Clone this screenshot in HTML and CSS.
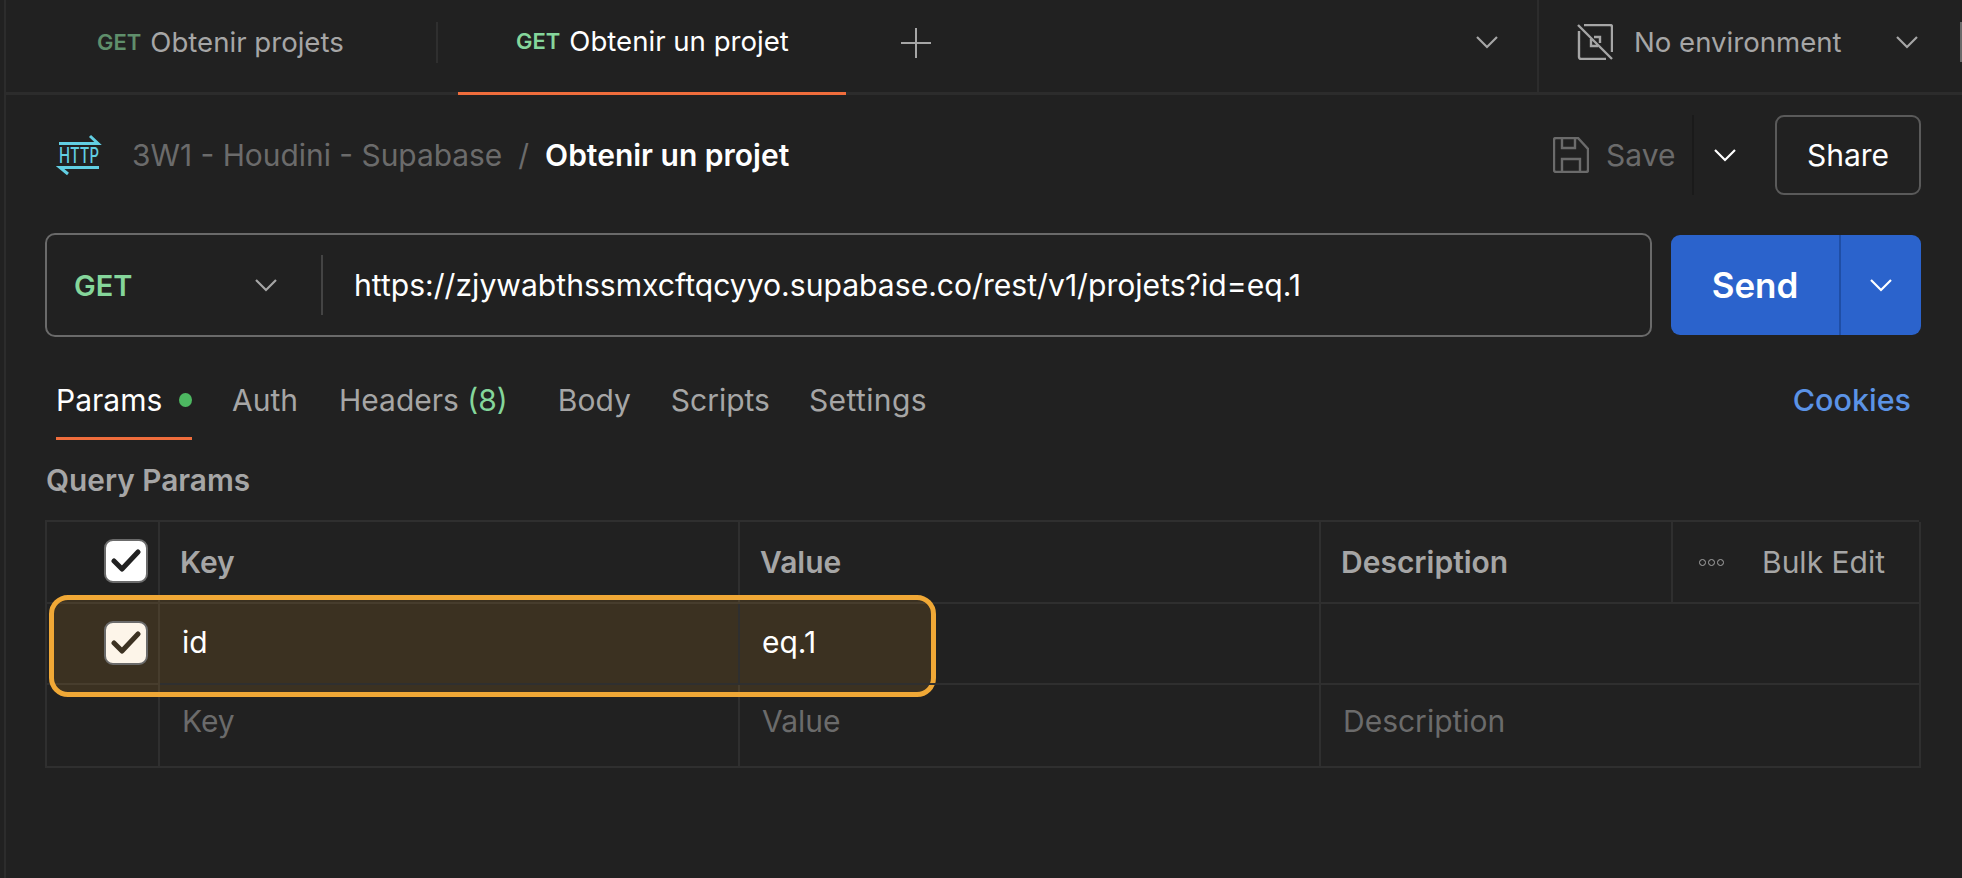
FILE: index.html
```html
<!DOCTYPE html>
<html lang="fr">
<head>
<meta charset="utf-8">
<title>Obtenir un projet</title>
<link rel="stylesheet" href="styles.css">
</head>
<body>
<div class="app">
  <header class="tabbar">
    <div class="tab tab-first">
      <span class="verb verb-dim">GET</span><span class="tab-name">Obtenir projets</span>
    </div>
    <div class="tab-sep"></div>
    <div class="tab tab-active">
      <span class="verb">GET</span><span class="tab-name">Obtenir un projet</span>
    </div>
    <svg class="plus" viewBox="0 0 30 30"><path d="M15 0V30M0 15H30"/></svg>
    <div class="spacer"></div>
    <svg class="chev chev-grey tabs-chev" viewBox="0 0 22 14"><path d="M1 2l10 10L21 2"/></svg>
    <div class="env">
      <svg class="env-icon" viewBox="0 0 36 36"><path d="M7 1H33a2 2 0 0 1 2 2V28M29 35H4a2 2 0 0 1-2-2V7M1 1L35 35M14 15V22H21M17 13H23V19"/></svg>
      <span class="env-name">No environment</span>
      <svg class="chev chev-grey env-chev" viewBox="0 0 22 14"><path d="M1 2l10 10L21 2"/></svg>
    </div>
    <div class="edge-mark"></div>
  </header>

  <main class="request">
    <div class="crumbs">
      <svg class="http" viewBox="0 0 42 40">
        <path class="http-line" d="M1 8.5H40L32 1M41 32.5H2L10 39"/>
        <text x="21" y="28" text-anchor="middle" textLength="40" lengthAdjust="spacingAndGlyphs">HTTP</text>
      </svg>
      <span class="crumb-parent">3W1 - Houdini - Supabase</span>
      <span class="crumb-slash">/</span>
      <span class="crumb-name">Obtenir un projet</span>
      <div class="spacer"></div>
      <svg class="save-icon" viewBox="0 0 36 36"><path d="M3 1H25L35 12V33a2 2 0 0 1-2 2H3a2 2 0 0 1-2-2V3a2 2 0 0 1 2-2ZM9 1V11H22V1M9 35V22H27V35"/></svg>
      <span class="save">Save</span>
      <div class="save-sep"></div>
      <svg class="chev chev-white save-chev" viewBox="0 0 22 14"><path d="M1 2l10 10L21 2"/></svg>
      <button class="share">Share</button>
    </div>

    <div class="urlrow">
      <div class="urlbox">
        <span class="method">GET</span>
        <svg class="chev chev-grey method-chev" viewBox="0 0 22 14"><path d="M1 2l10 10L21 2"/></svg>
        <div class="url-sep"></div>
        <span class="url">https://zjywabthssmxcftqcyyo.supabase.co/rest/v1/projets?id=eq.1</span>
      </div>
      <div class="send">
        <span class="send-label">Send</span>
        <span class="send-more"><svg class="chev chev-white" viewBox="0 0 22 14"><path d="M1 2l10 10L21 2"/></svg></span>
      </div>
    </div>

    <nav class="subtabs">
      <span class="subtab subtab-active">Params<i class="dot"></i></span>
      <span class="subtab subtab-auth">Auth</span>
      <span class="subtab subtab-headers">Headers <b class="count">(8)</b></span>
      <span class="subtab subtab-body">Body</span>
      <span class="subtab subtab-scripts">Scripts</span>
      <span class="subtab subtab-settings">Settings</span>
      <span class="spacer"></span>
      <span class="subtab cookies">Cookies</span>
    </nav>

    <h2 class="section">Query Params</h2>

    <div class="table-wrap">
      <div class="grid">
        <div class="cell cell-check"><span class="check"><svg viewBox="0 0 30 26"><path d="M3 13l8 8L27 4"/></svg></span></div>
        <div class="cell head">Key</div>
        <div class="cell head">Value</div>
        <div class="cell head">Description</div>
        <div class="cell bulk"><span class="dots"><i></i><i></i><i></i></span><span>Bulk Edit</span></div>

        <div class="cell cell-check"><span class="check check-warm"><svg viewBox="0 0 30 26"><path d="M3 13l8 8L27 4"/></svg></span></div>
        <div class="cell val">id</div>
        <div class="cell val">eq.1</div>
        <div class="cell span2"></div>

        <div class="cell"></div>
        <div class="cell ph">Key</div>
        <div class="cell ph">Value</div>
        <div class="cell ph span2">Description</div>
      </div>
      <div class="highlight"></div>
    </div>
  </main>
</div>
</body>
</html>
```
FILE: styles.css
```css
* { box-sizing: border-box; }
html, body { margin: 0; height: 100%; }
body {
  background: #212121;
  color: #fff;
  font-family: Inter, "Liberation Sans", sans-serif;
  overflow: hidden;
}
.app {
  height: 878px;
  margin-left: 4px;
  border-left: 2px solid #2c2c2c;
  display: flex;
  flex-direction: column;
}
.spacer { flex: 1; }
.chev { display: block; fill: none; stroke-width: 2.2; }
.chev path { fill: none; stroke: currentColor; }
.chev-grey { color: #a6a6a6; width: 22px; height: 14px; }
.chev-white { color: #fff; width: 22px; height: 14px; }

.tabbar {
  height: 95px;
  border-bottom: 3px solid #2c2c2c;
  display: flex;
  align-items: center;
  position: relative;
}
.tab { display: flex; align-items: center; font-size: 27.6px; }
.tab-first { width: 430px; height: 92px; padding-left: 91px; padding-bottom: 8px; color: #a6a6a6; }
.tab-sep { width: 2px; height: 41px; margin-bottom: 7px; background: #2f2f2f; }
.tab-active {
  margin-left: 20px;
  width: 388px;
  padding-left: 58px;
  padding-bottom: 11px;
  height: 95px;
  align-self: flex-start;
  border-bottom: 3px solid #f06d3c;
}
.verb { font-size: 22px; font-weight: 600; color: #85d69b; margin-right: 9px; }
.verb-dim { color: #5f8f6b; }
.plus { width: 30px; height: 30px; margin: 0 0 7px 55px; }
.plus path { stroke: #a6a6a6; stroke-width: 2; fill: none; }
.tabs-chev { margin: 0 39px 8px 0; }
.env {
  width: 425px;
  height: 92px;
  border-left: 2px solid #2c2c2c;
  display: flex;
  align-items: center;
  padding-left: 38px;
  padding-bottom: 8px;
  color: #a6a6a6;
  font-size: 27.6px;
}
.env-icon { width: 36px; height: 36px; margin-right: 21px; fill: none; stroke: #a6a6a6; stroke-width: 2.4; }
.env-name { width: 262px; }
.edge-mark { position: absolute; right: 0; top: 22px; width: 2px; height: 40px; background: #6a6a6a; }

.request { padding: 20px 41px 0 39px; flex: 1; }
.crumbs { height: 80px; display: flex; align-items: center; font-size: 30px; }
.http { width: 42px; height: 40px; margin-left: 13px; margin-right: 32px; overflow: visible; }
.http-line { fill: none; stroke: #62cfe3; stroke-width: 3; }
.http text { font-family: Inter, sans-serif; font-size: 22px; font-weight: 500; fill: #62cfe3; }
.crumb-parent { color: #6b6b6b; font-size: 29.9px; }
.crumb-slash { color: #6b6b6b; margin: 0 16px; }
.crumb-name { font-weight: 600; }
.save-icon { width: 36px; height: 36px; fill: none; stroke: #6b6b6b; stroke-width: 2.4; margin-right: 17px; }
.save { color: #6b6b6b; width: 86px; }
.save-sep { width: 2px; height: 80px; background: #1a1a1a; }
.save-chev { margin: 0 39px 0 20px; }
.share {
  width: 146px;
  height: 80px;
  background: transparent;
  border: 2px solid #5a5a5a;
  border-radius: 9px;
  color: #fff;
  font: 400 30px Inter, sans-serif;
}

.urlrow { margin-top: 38px; height: 104px; display: flex; align-items: center; }
.urlbox {
  width: 1607px;
  height: 104px;
  border: 2px solid #6a6a6a;
  border-radius: 10px;
  display: flex;
  align-items: center;
  padding-left: 27px;
}
.method { font-size: 29px; font-weight: 600; color: #85d69b; width: 181px; }
.method-chev { margin-right: 44px; }
.url-sep { width: 2px; height: 60px; background: #444; }
.url { font-size: 30.12px; margin-left: 31px; white-space: nowrap; }
.send {
  margin-left: 19px;
  width: 250px;
  height: 100px;
  background: #2b63cc;
  border-radius: 9px;
  display: flex;
  align-items: center;
}
.send-label { width: 170px; height: 100%; display: flex; align-items: center; justify-content: center; font-size: 35px; font-weight: 600; border-right: 2px solid #1f4ea6; }
.send-more { flex: 1; display: flex; justify-content: center; }

.subtabs { margin-top: 42px; height: 61px; display: flex; align-items: center; font-size: 30px; color: #a6a6a6; padding: 0 10px 0 11px; }
.subtab { display: flex; align-items: center; height: 61px; padding-bottom: 20px; white-space: pre; }
.subtab-active { color: #fff; width: 136px; padding-bottom: 17px; border-bottom: 3px solid #f06d3c; }
.dot { width: 14px; height: 14px; border-radius: 50%; background: #4db861; margin-left: 17px; }
.subtab-auth { margin-left: 40px; }
.subtab-headers { margin-left: 41px; }
.count { font-weight: 400; color: #85d69b; }
.subtab-body { margin-left: 50px; }
.subtab-scripts { margin-left: 40px; }
.subtab-settings { margin-left: 39px; letter-spacing: 0.4px; }
.cookies { color: #5b93e6; font-weight: 500; font-size: 30.5px; }

.section { margin: 20px 0 0 1px; font-size: 29.8px; line-height: 40px; font-weight: 600; color: #a6a6a6; }

.table-wrap { position: relative; margin: 20px 0 0 0; width: 1874px; }
.grid {
  display: grid;
  grid-template-columns: 113px 580px 581px 352px 248px;
  grid-template-rows: 82px 81px 83px;
  border-top: 2px solid #2f2f2f;
  border-left: 2px solid #2f2f2f;
}
.cell {
  border-right: 2px solid #2f2f2f;
  border-bottom: 2px solid #2f2f2f;
  display: flex;
  align-items: center;
  padding-left: 22px;
  font-size: 30px;
}
.cell-check { justify-content: flex-end; padding: 0 10px 2px 0; }
.span2 { grid-column: span 2; }
.head { font-weight: 600; color: #a6a6a6; padding-left: 20px; }
.bulk { color: #a6a6a6; font-weight: 400; padding-left: 26px; gap: 38px; }
.ph { color: #6b6b6b; padding-bottom: 9px; }
.val { color: #fff; padding-bottom: 3px; position: relative; z-index: 1; }
.dots { display: flex; gap: 2px; }
.dots i { width: 7px; height: 7px; border: 1.5px solid #a6a6a6; border-radius: 50%; }
.check {
  width: 44px;
  height: 44px;
  border-radius: 9px;
  background: #fff;
  border: 2px solid #6b6b6b;
  display: flex;
  align-items: center;
  justify-content: center;
}
.check svg { width: 30px; height: 26px; fill: none; stroke: #212121; stroke-width: 5; stroke-linecap: round; stroke-linejoin: round; }
.check-warm { background: #fdf5e9; position: relative; z-index: 1; }
.check-warm svg { stroke: #3c3222; }
.highlight {
  position: absolute;
  left: 4px;
  top: 75px;
  width: 887px;
  height: 102px;
  border: 5px solid #f0a836;
  border-radius: 19px;
  background: rgba(240, 165, 40, 0.13);
}
```
